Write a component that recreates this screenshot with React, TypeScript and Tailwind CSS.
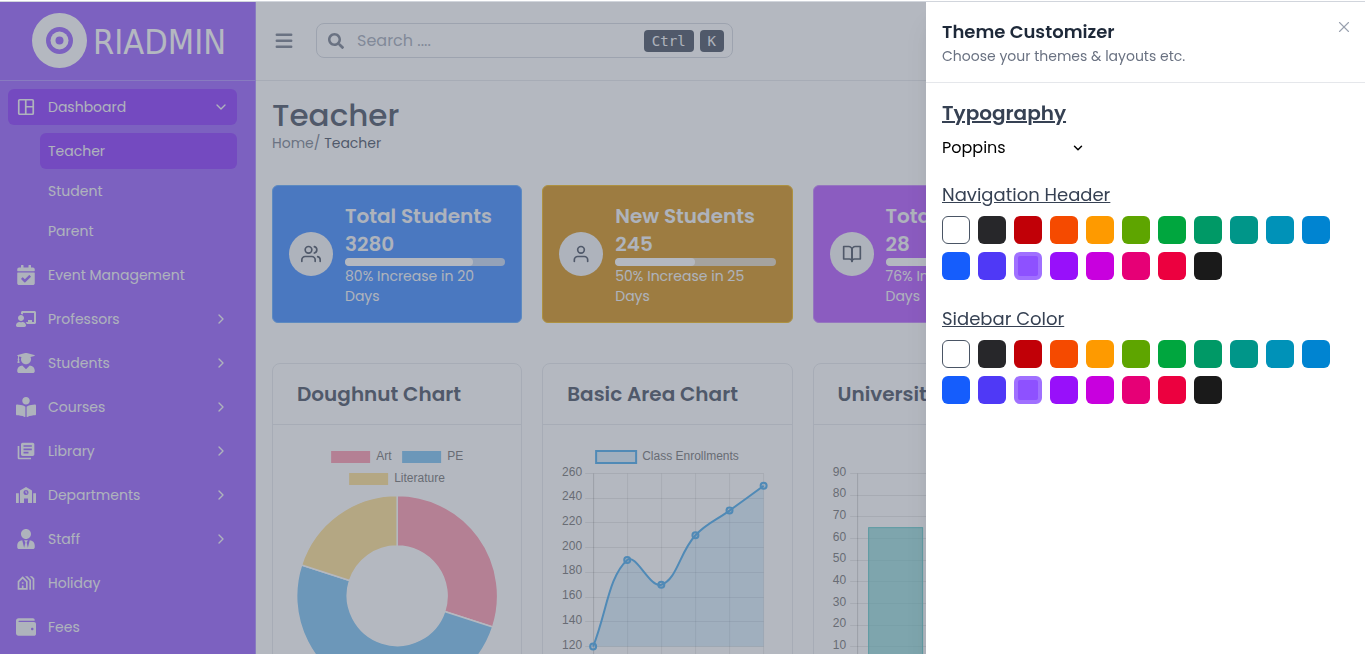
import type { ReactNode } from "react";
import { useState } from "react";
import { FiBookOpen, FiUser, FiUsers, FiX } from "react-icons/fi";
import { ChevronDown, ChevronRight } from "lucide-react";
import {
  FaBookReader,
  FaCalendarCheck,
  FaChalkboardTeacher,
  FaSearch,
  FaUserGraduate,
  FaUserTie,
  FaWallet,
} from "react-icons/fa";
import { MdLibraryBooks, MdOutlineHolidayVillage } from "react-icons/md";

function DashboardIcon() {
  return (
    <svg viewBox="0 0 20 20" className="size-5" fill="none" stroke="currentColor" strokeWidth="1.7" aria-hidden="true">
      <rect x="2.75" y="2.75" width="14.5" height="14.5" rx="1" />
      <path d="M9.75 2.75v14.5M9.75 9.75H17.25" />
    </svg>
  );
}

function SchoolIcon() {
  return (
    <svg viewBox="0 0 20 20" className="size-5" fill="currentColor" aria-hidden="true">
      <path d="M0 8.2h2.8V18H0zM17.2 8.2H20V18h-2.8z" />
      <path
        fillRule="evenodd"
        d="M10 2l6 3.6V18h-4v-4.6H8V18H4V5.600zM10 4.900a2.500 2.500 0 1 0 0 5a2.500 2.500 0 1 0 0-5z"
      />
      <path d="M9.500 5.800h1v1.500l1 .6-.5.8-1.500-.9z" />
    </svg>
  );
}

type NavItem = { label: string; icon: ReactNode; more?: boolean };

const navItems: NavItem[] = [
  { label: "Event Management", icon: <FaCalendarCheck className="size-5" /> },
  { label: "Professors", icon: <FaChalkboardTeacher className="size-5" />, more: true },
  { label: "Students", icon: <FaUserGraduate className="size-5" />, more: true },
  { label: "Courses", icon: <FaBookReader className="size-5" />, more: true },
  { label: "Library", icon: <MdLibraryBooks className="size-5" />, more: true },
  { label: "Departments", icon: <SchoolIcon />, more: true },
  { label: "Staff", icon: <FaUserTie className="size-5" />, more: true },
  { label: "Holiday", icon: <MdOutlineHolidayVillage className="size-5" /> },
  { label: "Fees", icon: <FaWallet className="size-5" /> },
];

function Sidebar() {
  return (
    <aside className="flex w-64 shrink-0 flex-col border-r border-violet-400 bg-violet-500 text-gray-100">
      <a href="#home" className="flex h-20 shrink-0 items-center border-b border-violet-400 pl-8 text-white">
        <svg viewBox="0 0 55 55" className="size-[55px] shrink-0" aria-hidden="true">
          <circle cx="27.5" cy="27.5" r="27.5" className="fill-white" />
          <circle cx="27.5" cy="27.5" r="13.5" className="fill-violet-500" />
          <circle cx="27.5" cy="27.5" r="9" className="fill-white" />
          <circle cx="27.5" cy="27.5" r="4" className="fill-violet-500" />
        </svg>
        <span className="ml-1.5 pt-0.5 font-['DejaVu_Sans_Condensed','DejaVu_Sans',sans-serif] text-[34px] leading-none">
          RIADMIN
        </span>
      </a>
      <nav className="flex flex-col gap-2 pt-2 pr-[18px] pl-2 text-sm">
        <div className="flex flex-col gap-2">
          <a href="#dashboard" className="flex h-9 items-center gap-3 rounded-md bg-violet-600 px-2">
            <DashboardIcon />
            <span className="grow">Dashboard</span>
            <ChevronDown className="size-4" />
          </a>
          <div className="flex flex-col gap-1 pl-8">
            <a href="#teacher" className="flex h-9 items-center rounded-md bg-violet-600 px-2">Teacher</a>
            <a href="#student" className="flex h-9 items-center rounded-md px-2">Student</a>
            <a href="#parent" className="flex h-9 items-center rounded-md px-2">Parent</a>
          </div>
        </div>
        {navItems.map((item) => (
          <a key={item.label} href="#section" className="flex h-9 items-center gap-3 rounded-md px-2">
            {item.icon}
            <span className="grow">{item.label}</span>
            {item.more && <ChevronRight className="size-4" />}
          </a>
        ))}
      </nav>
    </aside>
  );
}

function Header() {
  return (
    <header className="flex h-20 shrink-0 items-center gap-5 border-b border-gray-200 px-4">
      <button type="button" aria-label="Toggle sidebar" className="text-gray-500">
        <svg viewBox="0 0 24 25" className="h-[25px] w-6" fill="none" stroke="currentColor" strokeWidth="2.4" strokeLinecap="round">
          <path d="M4.750 6.800h14.500M4.750 12.800h14.500M4.750 18.800h14.500" />
        </svg>
      </button>
      <label className="flex h-[35px] w-[417px] items-center rounded-lg border border-gray-300 pr-2 pl-[11px] text-gray-500">
        <FaSearch className="size-4 shrink-0" />
        <input
          type="text"
          aria-label="Search"
          placeholder="Search ...."
          className="ml-[13px] min-w-0 grow bg-transparent text-base outline-none placeholder:text-gray-400"
        />
        <span className="flex gap-1.5 font-['DejaVu_Sans_Mono','Liberation_Mono',monospace] text-sm leading-[22px] text-gray-100">
          <kbd className="rounded bg-gray-700 px-2 font-[inherit]">Ctrl</kbd>
          <kbd className="rounded bg-gray-700 px-2 font-[inherit]">K</kbd>
        </span>
      </label>
    </header>
  );
}

const stats = [
  {
    title: "Total Students",
    value: "3280",
    percent: 80,
    note: "80% Increase in 20 Days",
    icon: <FiUsers className="size-5" />,
    box: "border-blue-400 bg-blue-500",
  },
  {
    title: "New Students",
    value: "245",
    percent: 50,
    note: "50% Increase in 25 Days",
    icon: <FiUser className="size-5" />,
    box: "border-yellow-500 bg-yellow-600",
  },
  {
    title: "Total Courses",
    value: "28",
    percent: 76,
    note: "76% Increase in 28 Days",
    icon: <FiBookOpen className="size-5" />,
    box: "border-purple-400 bg-purple-500",
  },
];

function StatCards() {
  return (
    <div className="mt-8 grid grid-cols-4 gap-5">
      {stats.map((s) => (
        <section key={s.title} className={`flex items-center gap-3 rounded-md border p-4 text-gray-100 ${s.box}`}>
          <div className="flex size-11 shrink-0 items-center justify-center rounded-full bg-gray-100 text-gray-700">
            {s.icon}
          </div>
          <div className="min-w-0 grow">
            <h2 className="text-xl font-semibold whitespace-nowrap">{s.title}</h2>
            <p className="text-xl font-semibold">{s.value}</p>
            <div className="h-2 overflow-hidden rounded-full bg-gray-200/80">
              <div className="h-full rounded-full bg-white" style={{ width: `${s.percent}%` }} />
            </div>
            <p className="text-sm">{s.note}</p>
          </div>
        </section>
      ))}
    </div>
  );
}

function ChartCard({ title, children }: { title: string; children: ReactNode }) {
  return (
    <section className="rounded-lg border border-gray-200">
      <h2 className="border-b border-gray-200 px-6 py-4 text-xl font-semibold text-gray-700">{title}</h2>
      <div className="px-6 pt-6">{children}</div>
    </section>
  );
}

const CHART = "h-[260px] w-full overflow-visible font-['Liberation_Sans',Arial,sans-serif] text-xs";

function ringSlice(cx: number, cy: number, outer: number, inner: number, from: number, to: number) {
  const at = (r: number, deg: number) => {
    const a = ((deg - 90) * Math.PI) / 180;
    return `${(cx + r * Math.cos(a)).toFixed(2)} ${(cy + r * Math.sin(a)).toFixed(2)}`;
  };
  const large = to - from > 180 ? 1 : 0;
  return `M${at(outer, from)}A${outer} ${outer} 0 ${large} 1 ${at(outer, to)}L${at(inner, to)}A${inner} ${inner} 0 ${large} 0 ${at(inner, from)}Z`;
}

function DoughnutChart() {
  const slices = [
    { color: "#ff6384", from: 0, to: 108 },
    { color: "#36a2eb", from: 108, to: 288 },
    { color: "#ffce56", from: 288, to: 360 },
  ];
  const legend = [
    { label: "Art", color: "#ff6384", x: 34, y: 2 },
    { label: "PE", color: "#36a2eb", x: 105, y: 2 },
    { label: "Literature", color: "#ffce56", x: 52, y: 24 },
  ];
  return (
    <svg viewBox="0 0 200 260" className={CHART} role="img" aria-label="Doughnut Chart">
      {legend.map((l) => (
        <g key={l.label}>
          <rect x={l.x} y={l.y} width="39" height="12" fill={l.color} fillOpacity="0.72" />
          <text x={l.x + 45} y={l.y + 9} fill="#666">{l.label}</text>
        </g>
      ))}
      {slices.map((s) => (
        <path
          key={s.color}
          d={ringSlice(100, 147, 100.5, 50, s.from, s.to)}
          fill={s.color}
          fillOpacity="0.72"
          stroke="#fff"
          strokeWidth="1.5"
        />
      ))}
    </svg>
  );
}

type Point = { x: number; y: number };

function smoothPath(points: Point[], tension: number) {
  const controls = points.map((cur, i) => {
    const prev = points[i - 1] ?? cur;
    const next = points[i + 1] ?? cur;
    const before = Math.hypot(cur.x - prev.x, cur.y - prev.y);
    const after = Math.hypot(next.x - cur.x, next.y - cur.y);
    const a = (tension * before) / (before + after);
    const b = (tension * after) / (before + after);
    return {
      inX: cur.x - a * (next.x - prev.x),
      inY: cur.y - a * (next.y - prev.y),
      outX: cur.x + b * (next.x - prev.x),
      outY: cur.y + b * (next.y - prev.y),
    };
  });
  return points.reduce((d, p, i) => {
    if (i === 0) return `M${p.x} ${p.y}`;
    const from = controls[i - 1];
    const to = controls[i];
    return `${d}C${from.outX} ${from.outY} ${to.inX} ${to.inY} ${p.x} ${p.y}`;
  }, "");
}

function AreaChart() {
  const ticks = [260, 240, 220, 200, 180, 160, 140, 120];
  const yOf = (v: number) => 197.5 - ((v - 120) * 173) / 140;
  const points = [120, 190, 170, 210, 230, 250].map((v, i) => ({ x: 26 + i * 34.1, y: yOf(v) }));
  const line = smoothPath(points, 0.4);
  return (
    <svg viewBox="0 0 200 260" className={CHART} role="img" aria-label="Basic Area Chart">
      <rect x="29" y="2" width="40" height="12" fill="#36a2eb" fillOpacity="0.2" stroke="#36a2eb" strokeWidth="2" />
      <text x="75" y="11" fill="#666">Class Enrollments</text>
      {ticks.map((t) => (
        <g key={t}>
          <line x1="18" x2="196.500" y1={Math.floor(yOf(t)) + 0.5} y2={Math.floor(yOf(t)) + 0.5} stroke="#000" strokeOpacity="0.1" />
          <text x="15" y={yOf(t) + 2} textAnchor="end" fill="#666">{t}</text>
        </g>
      ))}
      {points.map((p, i) => (
        <line
          key={p.x}
          x1={Math.floor(p.x) + 0.5}
          x2={Math.floor(p.x) + 0.5}
          y1="24.500"
          y2="205"
          stroke="#000"
          strokeOpacity={i === 0 ? 0.2 : 0.1}
        />
      ))}
      <path d={`${line}L${points[5].x} 197.500L26 197.500Z`} fill="#36a2eb" fillOpacity="0.2" />
      <path d={line} fill="none" stroke="#36a2eb" strokeWidth="2" />
      {points.map((p) => (
        <circle key={p.x} cx={p.x} cy={p.y} r="3" fill="#36a2eb" fillOpacity="0.2" stroke="#36a2eb" strokeWidth="2" />
      ))}
    </svg>
  );
}

function BarChart() {
  const ticks = [90, 80, 70, 60, 50, 40, 30, 20, 10];
  const yOf = (v: number) => 219.5 - (v * 195) / 90;
  return (
    <svg viewBox="0 0 200 260" className={CHART} role="img" aria-label="University">
      {ticks.map((t) => (
        <g key={t}>
          <line x1="12" x2="200" y1={Math.floor(yOf(t)) + 0.5} y2={Math.floor(yOf(t)) + 0.5} stroke="#000" strokeOpacity="0.1" />
          <text x="8" y={yOf(t) + 2} textAnchor="end" fill="#666">{t}</text>
        </g>
      ))}
      <line x1="19.500" x2="19.500" y1="24.500" y2="228" stroke="#000" strokeOpacity="0.2" />
      <rect x="30.500" y={yOf(65)} width="54" height={219.5 - yOf(65)} fill="#4bc0c0" fillOpacity="0.6" stroke="#4bc0c0" />
    </svg>
  );
}

const swatches = [
  { name: "White", tone: "border border-gray-600 bg-white" },
  { name: "Zinc", tone: "bg-zinc-800" },
  { name: "Red", tone: "bg-red-700" },
  { name: "Orange", tone: "bg-orange-600" },
  { name: "Amber", tone: "bg-amber-500" },
  { name: "Lime", tone: "bg-lime-600" },
  { name: "Green", tone: "bg-green-600" },
  { name: "Emerald", tone: "bg-emerald-600" },
  { name: "Teal", tone: "bg-teal-600" },
  { name: "Cyan", tone: "bg-cyan-600" },
  { name: "Sky", tone: "bg-sky-600" },
  { name: "Blue", tone: "bg-blue-600" },
  { name: "Indigo", tone: "bg-indigo-600" },
  { name: "Violet", tone: "bg-violet-500" },
  { name: "Purple", tone: "bg-purple-600" },
  { name: "Fuchsia", tone: "bg-fuchsia-600" },
  { name: "Pink", tone: "bg-pink-600" },
  { name: "Rose", tone: "bg-rose-600" },
  { name: "Black", tone: "bg-[#1a1a1a]" },
];

function SwatchPicker({ title }: { title: string }) {
  const [selected, setSelected] = useState("Violet");
  return (
    <section>
      <h3 className="text-lg leading-[30px] text-gray-700 underline">{title}</h3>
      <div className="mt-1.5 flex flex-wrap gap-2">
        {swatches.map((s) => (
          <button
            key={s.name}
            type="button"
            aria-label={`${title}: ${s.name}`}
            aria-pressed={selected === s.name}
            onClick={() => setSelected(s.name)}
            className={`size-7 rounded-md ${s.tone} ${selected === s.name ? "border-4 border-[#a070ff]" : ""}`}
          />
        ))}
      </div>
    </section>
  );
}

function ThemeCustomizer() {
  return (
    <aside className="fixed top-[2px] right-0 bottom-0 w-[439px] bg-white shadow-xl">
      <div className="flex items-start justify-between border-b border-gray-200 pr-3 pl-4">
        <div className="py-4">
          <h2 className="text-lg leading-7 font-semibold text-gray-800">Theme Customizer</h2>
          <p className="text-sm text-gray-500">Choose your themes &amp; layouts etc.</p>
        </div>
        <button type="button" aria-label="Close" className="mt-4 text-gray-400">
          <FiX className="size-[18px]" strokeWidth={1.5} />
        </button>
      </div>
      <div className="p-4">
        <label htmlFor="font-family" className="block text-xl font-semibold text-gray-700 underline">
          Typography
        </label>
        <div className="mt-2 mb-5 grid h-[25px] w-[143px] items-center">
          <select id="font-family" className="col-start-1 row-start-1 appearance-none bg-transparent text-base text-black">
            <option>Poppins</option>
          </select>
          <ChevronDown className="pointer-events-none col-start-1 row-start-1 size-3.5 justify-self-end" strokeWidth={2.5} />
        </div>
        <div className="flex flex-col gap-6">
          <SwatchPicker title="Navigation Header" />
          <SwatchPicker title="Sidebar Color" />
        </div>
      </div>
    </aside>
  );
}

export default function App() {
  return (
    <div className="flex h-screen flex-col overflow-hidden bg-white font-[Poppins,Inter,sans-serif]">
      <div className="z-10 -mb-px h-[2px] shrink-0 border-b border-gray-300 bg-white" />
      <div className="flex min-h-0 grow">
        <Sidebar />
        <div className="flex min-w-0 grow flex-col">
          <Header />
          <main className="min-h-0 grow overflow-hidden pt-4 pr-8 pl-4">
            <h1 className="text-[31px] leading-9 font-medium text-gray-700">Teacher</h1>
            <p className="text-sm text-gray-500">
              <a href="#home">Home</a>/ <span className="text-gray-700">Teacher</span>
            </p>
            <StatCards />
            <div className="mt-10 grid grid-cols-4 gap-5">
              <ChartCard title="Doughnut Chart">
                <DoughnutChart />
              </ChartCard>
              <ChartCard title="Basic Area Chart">
                <AreaChart />
              </ChartCard>
              <ChartCard title="University">
                <BarChart />
              </ChartCard>
            </div>
          </main>
        </div>
      </div>
      <div className="fixed inset-x-0 top-[2px] bottom-0 bg-gray-500/50" />
      <ThemeCustomizer />
    </div>
  );
}
